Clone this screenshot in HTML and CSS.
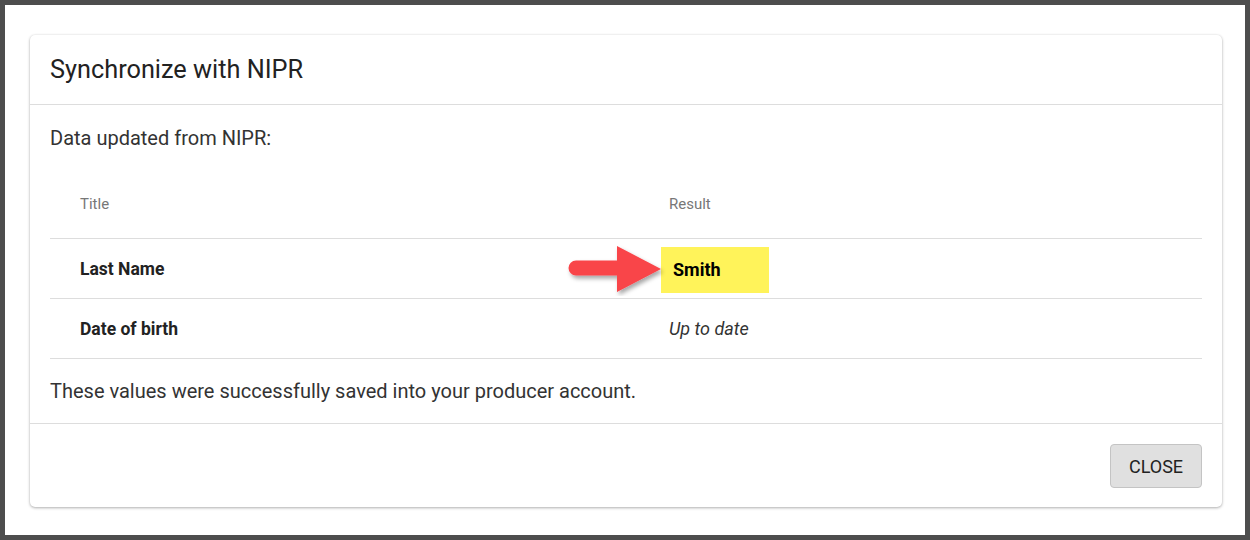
FILE: index.html
```html
<!DOCTYPE html>
<html>
<head>
    <meta charset="utf-8">
    <title>Synchronize with NIPR</title>
    <link rel="stylesheet" href="styles.css">
</head>
<body>
    <div class="frame">
        <div class="dialog">
            <div class="dialog-head">Synchronize with NIPR</div>

            <div class="dialog-body">
                <p class="intro">Data updated from NIPR:</p>

                <div class="results">
                    <div class="row head">
                        <div class="cell">Title</div>
                        <div class="cell">Result</div>
                    </div>
                    <div class="row">
                        <div class="cell label">Last Name</div>
                        <div class="cell">
                            <span class="mark">
                                <!-- red call-out arrow pointing at the changed value -->
                                <svg class="arrow" width="100" height="52" viewBox="0 0 100 52">
                                    <defs>
                                        <filter id="shade" x="-20%" y="-20%" width="140%" height="150%">
                                            <feDropShadow dx="2" dy="3" stdDeviation="2" flood-color="#000" flood-opacity="0.35"/>
                                        </filter>
                                    </defs>
                                    <path d="M 10 16.5 L 51 16.5 L 51 2 L 95 25 L 51 48 L 51 31.5 L 10 31.5 A 7.5 7.5 0 0 1 10 16.5 Z" fill="#f9444a" filter="url(#shade)"/>
                                </svg>
                                Smith
                            </span>
                        </div>
                    </div>
                    <div class="row">
                        <div class="cell label">Date of birth</div>
                        <div class="cell note">Up to date</div>
                    </div>
                </div>

                <p class="outro">These values were successfully saved into your producer account.</p>
            </div>

            <div class="dialog-foot">
                <button class="button">CLOSE</button>
            </div>
        </div>
    </div>
</body>
</html>
```

FILE: styles.css
```css
body { margin: 0; background-color: white; font-family: Roboto, "Liberation Sans", sans-serif; color: #333 }
.frame { box-sizing: border-box; width: 1250px; height: 540px; border: 5px solid #4d4d4d; padding: 30px 23px 0 25px; background-color: #fff }

.dialog { background-color: #fff; border-radius: 5px; box-shadow: 0 1px 3px rgba(0,0,0,0.3), 0 0 2px rgba(0,0,0,0.08) }
.dialog-head { height: 69px; display: flex; align-items: center; padding: 0 20px; font-size: 25.3px; color: #222; border-bottom: 1px solid #ddd }
.dialog-body { padding: 0 20px; border-bottom: 1px solid #ddd }
.intro { margin: 0; padding-top: 21px; height: 43px; font-size: 20px; line-height: 24px; color: #333 }
.outro { margin: 0; height: 64px; display: flex; align-items: center; font-size: 20px; color: #333 }

.row { display: grid; grid-template-columns: 589px 1fr; height: 59px; align-items: center; border-bottom: 1px solid #ddd }
.row.head { height: 69px; align-items: start; color: #777 }
.row.head .cell { padding-top: 26px; font-size: 15px }
.cell { padding-left: 30px; font-size: 17.5px }
.label { font-weight: bold; color: #222 }
.note { font-style: italic; font-size: 18px; color: #333 }

.mark { position: relative; display: inline-block; margin-left: -8px; padding: 0 12px; width: 84px; height: 46px; line-height: 46px; margin-top: 2px; background-color: #fff35a; font-size: 18px; font-weight: bold; color: #000 }
.arrow { position: absolute; left: -95px; top: -3px }

.dialog-foot { box-sizing: border-box; height: 83px; display: flex; justify-content: flex-end; align-items: flex-start; padding: 20px 20px 0 }
.button { width: 92px; height: 44px; border: 1px solid #c4c4c4; border-radius: 4px; background-color: #e0e0e0; font-family: Roboto, "Liberation Sans", sans-serif; font-size: 18px; color: #222 }
```
